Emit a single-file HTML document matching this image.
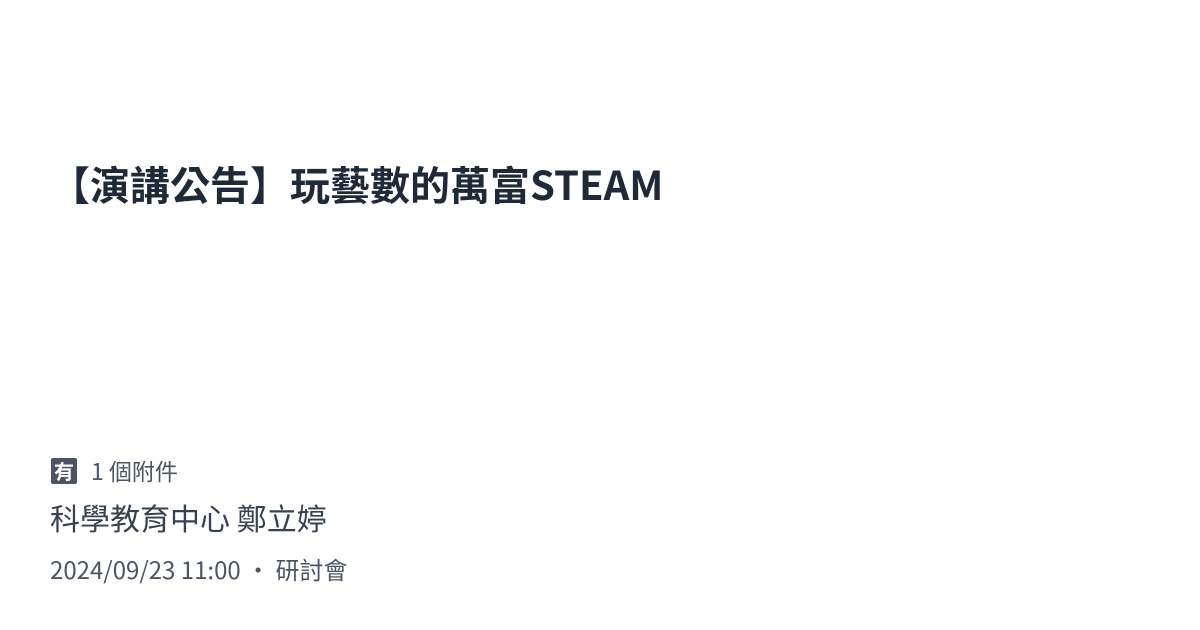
<!DOCTYPE html>
<html><head><meta charset="utf-8"><style>
body{margin:0;width:1200px;height:630px;background:#fff;position:relative;overflow:hidden;font-family:"Noto Sans CJK TC","Liberation Sans",sans-serif;}
.t{position:absolute;left:50px;top:155px;font-size:40px;font-weight:bold;color:#1f2937;white-space:nowrap;line-height:56px;}
.a{position:absolute;left:51px;top:455px;font-size:23px;color:#4b5563;line-height:30px;white-space:nowrap;}
.ic{display:inline-block;width:26px;height:26px;background:#4b5563;color:#fff;font-size:20px;font-weight:bold;line-height:26px;text-align:center;vertical-align:top;margin-top:3px;margin-right:14px;border-radius:2px;}
.o{position:absolute;left:50px;top:496px;font-size:30px;color:#374151;line-height:42px;white-space:nowrap;}
.d{position:absolute;left:50px;top:553px;font-size:24px;color:#4b5563;line-height:32px;white-space:nowrap;}
</style></head><body>
<div class="t">【演講公告】玩藝數的萬富STEAM</div>
<div class="a"><span class="ic">有</span>1 個附件</div>
<div class="o">科學教育中心 鄭立婷</div>
<div class="d">2024/09/23 11:00 ・ 研討會</div>
</body></html>
